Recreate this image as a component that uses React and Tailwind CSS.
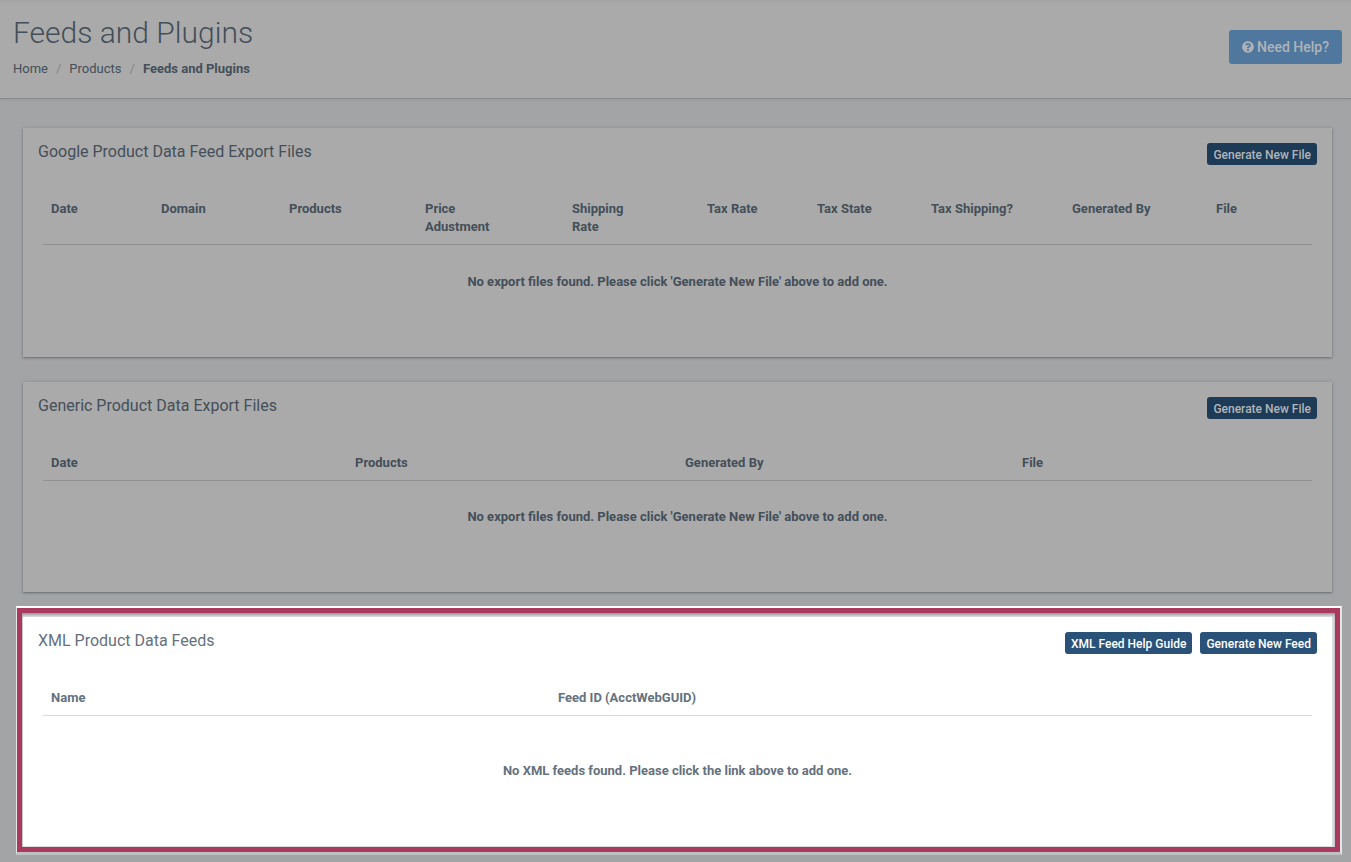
import React from 'react';
import { FaQuestionCircle } from 'react-icons/fa';

const googleColumns = [
  { label: 'Date', width: 'w-[110px]' },
  { label: 'Domain', width: 'w-[128px]' },
  { label: 'Products', width: 'w-[136px]' },
  { label: <>Price<br />Adustment</>, width: 'w-[147px]' },
  { label: <>Shipping<br />Rate</>, width: 'w-[135px]' },
  { label: 'Tax Rate', width: 'w-[110px]' },
  { label: 'Tax State', width: 'w-[114px]' },
  { label: 'Tax Shipping?', width: 'w-[141px]' },
  { label: 'Generated By', width: 'w-[144px]' },
  { label: 'File', width: 'w-[104px]' },
];

const genericColumns = [
  { label: 'Date', width: 'w-[304px]' },
  { label: 'Products', width: 'w-[330px]' },
  { label: 'Generated By', width: 'w-[337px]' },
  { label: 'File', width: 'w-[298px]' },
];

const xmlColumns = [
  { label: 'Name', width: 'w-[507px]' },
  { label: 'Feed ID (AcctWebGUID)', width: 'w-[762px]' },
];

const dimmedCard = 'ml-[7px] mr-[10px] mb-[25px] bg-[#aaaaaa] text-[#444f59] shadow-[0_1px_2px_#6b6d70,0_0_4px_#96989b]';
const dimmedButton = 'bg-[#1d3a56] text-[#b1b5b9]';
const brightButton = 'bg-[#2a5279] text-white';

const FeedTable = ({ columns, message, lineColor, messagePadding }) => (
  <table className="w-full table-fixed border-collapse text-[13px] leading-[18px]">
    <thead>
      <tr className={`border-b ${lineColor}`}>
        {columns.map((column, index) => (
          <th key={index} scope="col" className={`${column.width} p-2 text-left align-top font-bold`}>
            {column.label}
          </th>
        ))}
      </tr>
    </thead>
    <tbody>
      <tr>
        <td colSpan={columns.length} className={`${messagePadding} text-center font-bold`}>
          {message}
        </td>
      </tr>
    </tbody>
  </table>
);

const FeedCard = ({ title, actions, buttonClass, className, children }) => (
  <section className={`px-[15px] pt-[15px] ${className}`}>
    <div className="flex items-start justify-between">
      <h2 className="text-base leading-[18px]">{title}</h2>
      <div className="flex gap-2">
        {actions.map((action) => (
          <button
            key={action}
            type="button"
            className={`h-[22px] rounded-[3px] px-[6px] pt-[2px] text-xs font-medium ${buttonClass}`}
          >
            {action}
          </button>
        ))}
      </div>
    </div>
    <div className="mt-[27px] px-[5px]">{children}</div>
  </section>
);

const PageHeader = () => (
  <header className="flex items-start justify-between border-b border-[#8a8b8c] bg-[#aaaaaa] pt-[17px] pr-[9px] pb-5 pl-[13px] text-[#444f59] shadow-[0_1px_2px_#96989a,inset_0_3px_3px_-2px_#a0a0a0]">
    <div>
      <h1 className="text-[30px] leading-8 font-light">Feeds and Plugins</h1>
      <nav aria-label="Breadcrumb" className="mt-[11px]">
        <ol className="flex text-[13px] leading-[18px]">
          <li><a href="#home">Home</a></li>
          <li className="px-2 text-[#878787]" aria-hidden="true">/</li>
          <li><a href="#products">Products</a></li>
          <li className="px-2 text-[#878787]" aria-hidden="true">/</li>
          <li className="font-bold" aria-current="page">Feeds and Plugins</li>
        </ol>
      </nav>
    </div>
    <button
      type="button"
      className="mt-[13px] flex h-[34px] items-center gap-[3px] rounded-[3px] bg-[#50789f] px-[13px] text-sm font-medium text-[#afb3b7]"
    >
      <FaQuestionCircle className="h-3 w-3" />
      Need Help?
    </button>
  </header>
);

const App = () => {
  const noFiles = "No export files found. Please click 'Generate New File' above to add one.";

  return (
    <div className="flex min-h-screen flex-col bg-[#a2a4a6] font-['Roboto',sans-serif]">
      <PageHeader />
      <main className="flex-1 pt-[29px] pr-[9px] pb-[7px] pl-4">
        <FeedCard
          title="Google Product Data Feed Export Files"
          actions={['Generate New File']}
          buttonClass={dimmedButton}
          className={`min-h-[229px] ${dimmedCard}`}
        >
          <FeedTable
            columns={googleColumns}
            message={noFiles}
            lineColor="border-[#8f9092]"
            messagePadding="py-7"
          />
        </FeedCard>

        <FeedCard
          title="Generic Product Data Export Files"
          actions={['Generate New File']}
          buttonClass={dimmedButton}
          className={`min-h-[210px] ${dimmedCard}`}
        >
          <FeedTable
            columns={genericColumns}
            message={noFiles}
            lineColor="border-[#8f9092]"
            messagePadding="py-[27px]"
          />
        </FeedCard>

        {/* highlighted panel */}
        <div className="-mt-[11px] border-t-2 border-r-2 border-b-3 border-l border-t-white border-r-[#e3e5e6] border-b-[#bfc0c1] border-l-[#e3e5e6]">
          <div className="border-5 border-[#a93a5d] bg-[#e0e1e5] pt-1 pr-[3px] pb-px pl-px shadow-[inset_0_2px_3px_#969799]">
            <FeedCard
              title="XML Product Data Feeds"
              actions={['XML Feed Help Guide', 'Generate New Feed']}
              buttonClass={brightButton}
              className="min-h-[229px] bg-white text-[#65717e]"
            >
              <FeedTable
                columns={xmlColumns}
                message="No XML feeds found. Please click the link above to add one."
                lineColor="border-[#d9dadb]"
                messagePadding="py-[46px]"
              />
            </FeedCard>
          </div>
        </div>
      </main>
    </div>
  );
};

export default App;
